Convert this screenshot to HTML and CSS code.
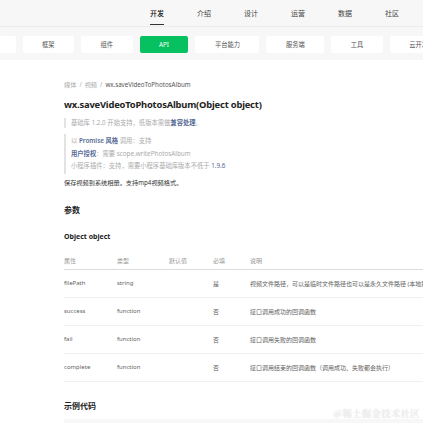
FILE: index.html
```html
<!DOCTYPE html>
<html lang="zh">
<head>
<meta charset="utf-8">
<title>wx.saveVideoToPhotosAlbum</title>
<link rel="stylesheet" href="styles.css">
</head>
<body>
<header class="header">
  <nav class="topnav">
    <a class="topnav-item active">开发</a>
    <a class="topnav-item">介绍</a>
    <a class="topnav-item">设计</a>
    <a class="topnav-item">运营</a>
    <a class="topnav-item">数据</a>
    <a class="topnav-item">社区</a>
  </nav>
  <div class="subnav">
    <a class="tab">指南</a>
    <a class="tab">框架</a>
    <a class="tab">组件</a>
    <a class="tab tab-active">API</a>
    <a class="tab">平台能力</a>
    <a class="tab">服务端</a>
    <a class="tab">工具</a>
    <a class="tab">云开发</a>
  </div>
</header>
<main class="content">
  <div class="crumbs"><span>媒体</span><span class="sep">/</span><span>视频</span><span class="sep">/</span><span class="crumb-cur">wx.saveVideoToPhotosAlbum</span></div>
  <h1 class="title">wx.saveVideoToPhotosAlbum(Object object)</h1>
  <div class="note">基础库 1.2.0 开始支持，低版本需做<a class="link">兼容处理</a>。</div>
  <div class="note note-list">
    <p>以 <b class="link">Promise 风格</b> 调用：支持</p>
    <p><span class="link">用户授权</span>：需要 scope.writePhotosAlbum</p>
    <p>小程序插件：支持，需要小程序基础库版本不低于 <span class="link-plain">1.9.6</span></p>
  </div>
  <p class="desc">保存视频到系统相册。支持mp4视频格式。</p>
  <h2 class="h2">参数</h2>
  <h3 class="h3">Object object</h3>
  <div class="table">
    <div class="row head">
      <span>属性</span><span>类型</span><span>默认值</span><span>必填</span><span>说明</span>
    </div>
    <div class="row">
      <span>filePath</span><span>string</span><span></span><span>是</span><span>视频文件路径，可以是临时文件路径也可以是永久文件路径 (本地路径)</span>
    </div>
    <div class="row">
      <span>success</span><span>function</span><span></span><span>否</span><span>接口调用成功的回调函数</span>
    </div>
    <div class="row">
      <span>fail</span><span>function</span><span></span><span>否</span><span>接口调用失败的回调函数</span>
    </div>
    <div class="row">
      <span>complete</span><span>function</span><span></span><span>否</span><span>接口调用结束的回调函数（调用成功、失败都会执行）</span>
    </div>
  </div>
  <h2 class="h2 h2-code">示例代码</h2>
  <div class="code"></div>
</main>
<div class="watermark">@稀土掘金技术社区</div>
</body>
</html>
```
FILE: styles.css
```css
html, body {
  margin: 0;
  padding: 0;
  background: #fff;
  overflow: hidden;
}
body {
  width: 423px;
  height: 423px;
  position: relative;
  font-family: "Noto Sans", "Noto Sans CJK SC", sans-serif;
  color: #333;
}
a { text-decoration: none; color: inherit; }
p { margin: 0; }

.header {
  background: #f7f7f7;
  height: 60px;
}
.topnav {
  height: 27px;
  border-bottom: 1px solid #ececec;
  display: flex;
  padding-left: 150px;
  gap: 33px;
  box-sizing: border-box;
}
.topnav-item {
  font-size: 7px;
  line-height: 27px;
  color: #444;
  position: relative;
  width: 14px;
  text-align: center;
  white-space: nowrap;
}
.topnav-item.active { color: #111; font-weight: 500; }
.topnav-item.active::after {
  content: "";
  position: absolute;
  left: 0;
  right: 0;
  bottom: 1px;
  height: 1.5px;
  background: #333;
}
.subnav {
  display: flex;
  gap: 7px;
  margin-left: -36px;
  padding-top: 9px;
  white-space: nowrap;
}
.tab {
  flex: none;
  height: 17px;
  line-height: 17px;
  padding: 0 19.5px;
  background: #fff;
  border-radius: 2px;
  font-size: 6.25px;
  color: #555;
  text-align: center;
}
.tab-active {
  background: #07c160;
  color: #fff;
  padding: 0 19.5px;
}

.content {
  padding-left: 64px;
  width: 420px;
}
.crumbs {
  margin-top: 19px;
  font-size: 6.2px;
  line-height: 12px;
  color: #aaa;
  white-space: nowrap;
}
.sep { margin: 0 3px; }
.crumb-cur { color: #555; }
.title {
  margin: 6px 0 0;
  font-size: 9.4px;
  line-height: 16px;
  font-weight: 700;
  color: #222;
  letter-spacing: -0.2px;
  white-space: nowrap;
}
.note {
  margin-top: 5px;
  border-left: 2px solid #e3e3e3;
  padding-left: 5px;
  font-size: 6.3px;
  line-height: 10px;
  color: #aaa;
  white-space: nowrap;
}
.note-list {
  margin-top: 6px;
  padding-top: 1px;
  padding-bottom: 1px;
}
.note-list p { line-height: 12.5px; }
.link { color: #576b95; font-weight: 600; }
.link-plain { color: #576b95; }
.desc {
  margin-top: 3px;
  font-size: 6.2px;
  line-height: 12px;
  color: #333;
  white-space: nowrap;
}
.h2 {
  margin: 14px 0 0;
  font-size: 8px;
  line-height: 14px;
  font-weight: 700;
  color: #222;
}
.h3 {
  margin: 14px 0 0;
  font-size: 7px;
  line-height: 12px;
  font-weight: 700;
  color: #222;
}
.table {
  margin-top: 10px;
  width: 420px;
  font-size: 6px;
  color: #5f5f5f;
}
.row {
  display: grid;
  grid-template-columns: 53px 52px 44px 37px 1fr;
  height: 28px;
  box-sizing: border-box;
  align-items: center;
  border-bottom: 1px solid #f0f0f0;
  white-space: nowrap;
}
.row.head {
  height: 17px;
  align-items: start;
  border-bottom: 1px solid #dcdcdc;
  color: #999;
}
.row span { overflow: hidden; }
.row.head span { line-height: 16px; }
.h2-code { margin-top: 17px; }
.code {
  margin-top: 6px;
  height: 30px;
  background: #f7f7f7;
}
.watermark {
  position: absolute;
  right: 3px;
  bottom: 3px;
  font-family: "Noto Serif CJK SC", "Noto Sans CJK SC", serif;
  font-size: 9.5px;
  color: rgba(250,250,250,0.95);
  text-shadow: 0 0 1px rgba(0,0,0,0.25);
  letter-spacing: 0.2px;
}
```
